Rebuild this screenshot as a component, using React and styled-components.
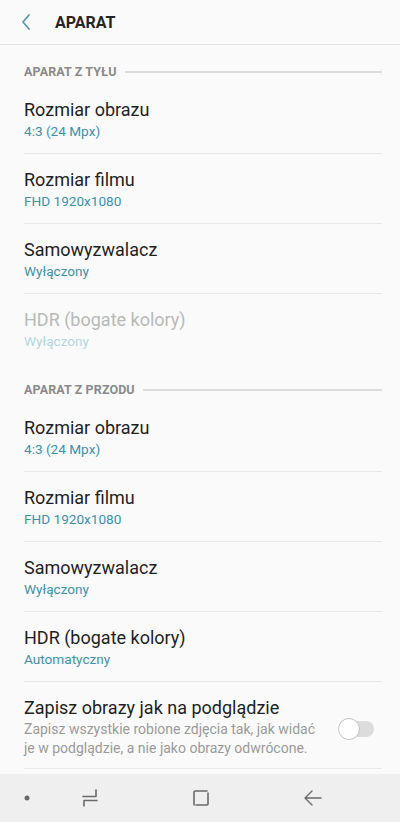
import React from "react"
import styled, { createGlobalStyle } from "styled-components"

const GlobalStyle = createGlobalStyle`
    html, body {
        margin: 0;
        padding: 0;
        background: #fafafa;
    }
    body {
        font-family: Roboto, "Noto Sans", "Liberation Sans", sans-serif;
        -webkit-font-smoothing: antialiased;
    }
`

const Screen = styled.div`
    width: 400px;
    height: 822px;
    display: flex;
    flex-direction: column;
    background: #fafafa;
    overflow: hidden;
`

const Header = styled.div`
    height: 45px;
    flex-shrink: 0;
    display: flex;
    align-items: center;
    border-bottom: 1px solid #e4e4e4;
    box-sizing: border-box;
`

const BackButton = styled.div`
    width: 55px;
    height: 45px;
    display: flex;
    align-items: center;
    padding-left: 20px;
    box-sizing: border-box;
`

const Title = styled.div`
    font-size: 16px;
    font-weight: 700;
    color: #252525;
    margin-top: 1px;
`

const Content = styled.div`
    flex: 1;
    display: flex;
    flex-direction: column;
`

const SectionHeader = styled.div`
    display: flex;
    align-items: center;
    gap: 8px;
    padding: 18px 18px 4px 24px;
    height: 17px;
    font-size: 12.5px;
    font-weight: 700;
    color: #8a8a8a;
    letter-spacing: 0.1px;
    &::after {
        content: "";
        flex: 1;
        height: 2px;
        background: #dcdcdc;
    }
`

const Row = styled.div`
    display: flex;
    align-items: center;
    margin: 0 18px 0 24px;
    padding: 15px 0 ${props => props.$tall ? "10px" : "12px"};
    border-bottom: ${props => props.$last ? "none" : "1px solid #e8e8e8"};
`

const RowText = styled.div`
    flex: 1;
    display: flex;
    flex-direction: column;
`

const RowTitle = styled.div`
    font-size: 18px;
    line-height: 22px;
    color: ${props => props.$disabled ? "#b9b9b9" : "#1f1f1f"};
`

const RowSub = styled.div`
    font-size: 13.6px;
    line-height: 20px;
    color: ${props => props.$disabled ? "#b3d6df" : "#3f91a8"};
`

const RowDesc = styled.div`
    font-size: 14px;
    line-height: 19px;
    color: #9a9a9a;
    margin-top: 1px;
`

const Toggle = styled.div`
    position: relative;
    width: 36px;
    height: 22px;
    margin: 2px 8px 0 14px;
    flex-shrink: 0;
    &::before {
        content: "";
        position: absolute;
        left: 3px;
        right: 0;
        top: 3px;
        height: 16px;
        border-radius: 8px;
        background: #dcdcdc;
    }
    &::after {
        content: "";
        position: absolute;
        left: 0;
        top: 0;
        width: 20px;
        height: 20px;
        border-radius: 50%;
        background: #fff;
        border: 1px solid #c4c4c4;
    }
`

const NavBar = styled.div`
    height: 48px;
    flex-shrink: 0;
    background: #efefef;
    display: flex;
    align-items: center;
`

const NavSlot = styled.div`
    width: ${props => props.$w}px;
    display: flex;
    justify-content: center;
    align-items: center;
`

const sections = [
    {
        title: "APARAT Z TYŁU",
        rows: [
            { title: "Rozmiar obrazu", sub: "4:3 (24 Mpx)" },
            { title: "Rozmiar filmu", sub: "FHD 1920x1080" },
            { title: "Samowyzwalacz", sub: "Wyłączony" },
            { title: "HDR (bogate kolory)", sub: "Wyłączony", disabled: true },
        ],
    },
    {
        title: "APARAT Z PRZODU",
        rows: [
            { title: "Rozmiar obrazu", sub: "4:3 (24 Mpx)" },
            { title: "Rozmiar filmu", sub: "FHD 1920x1080" },
            { title: "Samowyzwalacz", sub: "Wyłączony" },
            { title: "HDR (bogate kolory)", sub: "Automatyczny" },
        ],
    },
]

const App = () => {
    return (
        <>
            <GlobalStyle />
            <Screen>
                <Header>
                    <BackButton>
                        <svg width="12" height="18" viewBox="0 0 12 18">
                            <path d="M9 2 L3 9 L9 16" fill="none" stroke="#5e98a9" strokeWidth="1.8" strokeLinecap="round" strokeLinejoin="round" />
                        </svg>
                    </BackButton>
                    <Title>APARAT</Title>
                </Header>
                <Content>
                    {sections.map((section, si) => (
                        <React.Fragment key={si}>
                            <SectionHeader>{section.title}</SectionHeader>
                            {section.rows.map((row, ri) => (
                                <Row key={ri} $last={si === 0 && ri === section.rows.length - 1}>
                                    <RowText>
                                        <RowTitle $disabled={row.disabled}>{row.title}</RowTitle>
                                        <RowSub $disabled={row.disabled}>{row.sub}</RowSub>
                                    </RowText>
                                </Row>
                            ))}
                        </React.Fragment>
                    ))}
                    <Row $tall>
                        <RowText>
                            <RowTitle>Zapisz obrazy jak na podglądzie</RowTitle>
                            <RowDesc>
                                Zapisz wszystkie robione zdjęcia tak, jak widać je w podglądzie, a nie jako obrazy odwrócone.
                            </RowDesc>
                        </RowText>
                        <Toggle />
                    </Row>
                </Content>
                <NavBar>
                    <NavSlot $w={54}>
                        <svg width="6" height="6" viewBox="0 0 6 6">
                            <circle cx="3" cy="3" r="2.5" fill="#6a6a6a" />
                        </svg>
                    </NavSlot>
                    <NavSlot $w={72}>
                        <svg width="18" height="20" viewBox="0 0 18 20">
                            <path d="M2 8.5 H15 V2" fill="none" stroke="#6a6a6a" strokeWidth="1.6" strokeLinecap="round" strokeLinejoin="round" />
                            <path d="M16 12.5 H3 V18" fill="none" stroke="#6a6a6a" strokeWidth="1.6" strokeLinecap="round" strokeLinejoin="round" />
                        </svg>
                    </NavSlot>
                    <NavSlot $w={150}>
                        <svg width="18" height="18" viewBox="0 0 18 18">
                            <path d="M2 16 V3 Q2 2 3 2 H15" fill="none" stroke="#6a6a6a" strokeWidth="1.6" strokeLinecap="round" strokeLinejoin="round" />
                            <path d="M4 16 H15 Q16 16 16 15 V4" fill="none" stroke="#6a6a6a" strokeWidth="1.6" strokeLinecap="round" strokeLinejoin="round" />
                        </svg>
                    </NavSlot>
                    <NavSlot $w={74}>
                        <svg width="20" height="18" viewBox="0 0 20 18">
                            <path d="M9 2 L2 9 L9 16 M2 9 H18" fill="none" stroke="#6a6a6a" strokeWidth="1.4" strokeLinecap="round" strokeLinejoin="round" />
                        </svg>
                    </NavSlot>
                </NavBar>
            </Screen>
        </>
    )
}

export default App
